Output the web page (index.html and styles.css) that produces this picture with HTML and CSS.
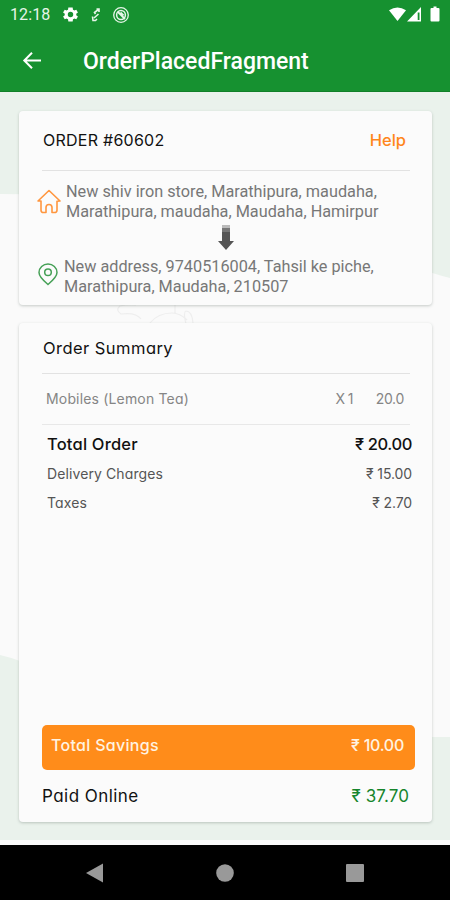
FILE: index.html
```html
<!DOCTYPE html>
<html lang="en">
<head>
<meta charset="utf-8">
<title>OrderPlacedFragment</title>
<link rel="stylesheet" href="styles.css">
</head>
<body>
<header class="top">
  <div class="status">
    <span class="time">12:18</span>
    <svg class="gear" width="17" height="17" viewBox="1 1 22 22"><path fill="#fff" fill-rule="evenodd" d="M19.4 13a7.500 7.500 0 0 0 0-2l2.200-1.700-2.100-3.600-2.600 1a7.500 7.500 0 0 0-1.700-1L14.800 3H9.200l-.4 2.700a7.500 7.500 0 0 0-1.700 1l-2.600-1-2.100 3.600L4.600 11a7.500 7.500 0 0 0 0 2l-2.200 1.700 2.100 3.600 2.600-1a7.500 7.500 0 0 0 1.700 1l.4 2.700h5.600l.4-2.700a7.500 7.500 0 0 0 1.700-1l2.600 1 2.100-3.600zM12 15.500a3.500 3.500 0 1 1 0-7 3.500 3.500 0 0 1 0 7z"/></svg>
    <svg class="sync" width="10" height="16" viewBox="0 0 10 16"><path fill="none" stroke="#e6f5e8" stroke-width="1.600" d="M8 2 3.500 5.500l1 1.500M7.500 7l-4.500 4M1.500 9.500l.5 4h2.500L6 12M5.500 2H8v3"/></svg>
    <svg class="at" width="18" height="18" viewBox="0 0 18 18" fill="none" stroke="#e6f5e8"><circle cx="9" cy="9" r="7.300" stroke-width="1.300"/><circle cx="9" cy="9" r="4.400" stroke-width="1.500"/><path stroke-width="1.800" d="M6 6l7 7M8.500 6.500l3 3"/></svg>
    <svg class="signals" width="54" height="18" viewBox="0 0 54 18"><path fill="#fff" d="M1 4.300Q9.500-1.300 18 4.300L9.500 15z"/><path fill="#fff" fill-rule="evenodd" d="M33 1v14.500H19zM29.700 6.500v7.500h1.800V6.500z"/><path fill="#fff" d="M43.500 2h2V.5h3V2h2q1 0 1 1v11.500q0 1-1 1h-7q-1 0-1-1V3q0-1 1-1z"/></svg>
  </div>
  <div class="appbar">
    <svg width="20" height="20" viewBox="0 0 20 20"><path fill="none" stroke="#fff" stroke-width="2" d="M19 8.500H2.500M10 .8 2.300 8.500l7.700 7.700"/></svg>
    <h1 class="title">OrderPlacedFragment</h1>
  </div>
</header>
<main class="screen">
  <svg class="backdrop" width="450" height="753" viewBox="0 92 450 753"><path fill="#fafafa" d="M0 92h450v753H0z"/><path fill="#eaf2ec" d="M0 92h450v186q-16-4-36-11L180 210Q90 194 0 194zM0 655q9 2 20 6l160 76h270v103H0z"/><g fill="none" stroke="#eeeeee" stroke-width="1.200"><path d="M141 319q-5-7-20-5-6-4-1-8 9-2 16-1M150 323q8-10 22-10 8 0 15 7M175 305v8M186 324q-3-12 0-13 6 0 7 12"/></g></svg>
  <section class="card order">
    <div class="order-head"><h2 class="geo order-no">ORDER #60602</h2><a class="geo help">Help</a></div>
    <div class="address from">
      <svg width="24" height="25" viewBox="0 0 24 25"><path fill="none" stroke="#ff963f" stroke-width="1.600" stroke-linejoin="round" stroke-linecap="round" d="M4 12 1 12 12 1.500 23 12l-3 .2v9q0 2.300-2.500 2.300H15v-5q0-3-3-3t-3 3v5H6.500Q4 23.500 4 21.200z"/></svg>
      <p>New shiv iron store, Marathipura, maudaha,<br>Marathipura, maudaha, Maudaha, Hamirpur</p>
    </div>
    <svg class="down" width="18" height="25" viewBox="0 0 18 25"><path fill="#bbb" d="M5 0h8v3H5z"/><path fill="#777" d="M5 3h8v4H5z"/><path fill="#555" d="M5 7h8v9h4l-8 9-8-9h4z"/></svg>
    <div class="address to">
      <svg width="20" height="23" viewBox="0 0 20 23"><g fill="none" stroke="#45a056" stroke-width="1.500"><path d="M10 21.500Q1 14 1 9.500a9 8.500 0 0 1 18 0Q19 14 10 21.500z"/><circle cx="10" cy="9.300" r="3.300"/></g></svg>
      <p>New address, 9740516004, Tahsil ke piche,<br>Marathipura, Maudaha, 210507</p>
    </div>
  </section>
  <section class="card summary">
    <h2 class="geo sum-title">Order Summary</h2>
    <div class="geo item"><span class="item-name">Mobiles (Lemon Tea)</span><span class="qty">X 1</span><span class="price">20.0</span></div>
    <div class="geo row total"><span class="l">Total Order</span><span class="r">₹ 20.00</span></div>
    <div class="geo row delivery"><span class="l">Delivery Charges</span><span class="r">₹ 15.00</span></div>
    <div class="geo row taxes"><span class="l">Taxes</span><span class="r">₹ 2.70</span></div>
    <div class="geo savings"><span class="l">Total Savings</span><span class="r">₹ 10.00</span></div>
    <div class="geo paid"><span class="l">Paid Online</span><span class="r">₹ 37.70</span></div>
  </section>
</main>
<nav class="nav">
  <svg width="18" height="20" viewBox="0 0 18 20"><path fill="#999" d="M0 10 17 .5v19z"/></svg>
  <svg width="18" height="20" viewBox="0 0 18 20"><circle cx="9" cy="10" r="8.800" fill="#999"/></svg>
  <svg width="18" height="20" viewBox="0 0 18 20"><rect y="1" width="18" height="18" rx="1" fill="#999"/></svg>
</nav>
</body>
</html>
```
FILE: styles.css
```css
* { box-sizing: border-box; }
body { margin: 0; width: 450px; height: 900px; overflow: hidden; font-family: Roboto, sans-serif; display: flex; flex-direction: column; background: #fafafa; }
h1, h2, p { margin: 0; font-weight: 400; }
svg { display: block; flex: none; }
.top { height: 92px; background: #169130; color: #fff; border-bottom: 1px solid #118028; }
.status { height: 29px; display: flex; align-items: center; padding-left: 10px; }
.time { font-size: 16px; width: 52px; letter-spacing: 0.1px; color: #e6f5e8; }
.sync { margin-left: 12px; }
.at { margin-left: 11px; }
.signals { margin-left: auto; margin-right: 8px; }
.appbar { height: 63px; display: flex; align-items: center; padding: 2px 0 0 22px; }
.title { margin-left: 41px; font-size: 23px; font-weight: 500; }
.screen { height: 753px; padding: 19px 18px 0 19px; position: relative; }
.backdrop { position: absolute; left: 0; top: 0; z-index: -1; }
.card { background: #fbfbfb; border-radius: 4px; box-shadow: 0 1px 3px rgba(60, 80, 70, 0.28); }
.geo { font-family: Inter, sans-serif; font-feature-settings: "cv11"; color: #111; }
.order { height: 194px; }
.order-head { height: 60px; margin: 0 22px 0 23px; padding: 0 4px 1px 1px; display: flex; justify-content: space-between; align-items: center; border-bottom: 1px solid #e2e2e2; }
.order-no { font-size: 16px; letter-spacing: 0.25px; }
.help { font-size: 16.500px; font-weight: 500; color: #ff861a; }
.address { display: flex; align-items: flex-start; font-size: 16.250px; line-height: 19.500px; color: #777; white-space: nowrap; }
.from { padding: 11px 0 0 18px; }
.from svg { margin-top: 7px; }
.from p { margin-left: 5px; }
.down { margin: 4px 0 7px 198px; }
.to { padding-left: 19px; }
.to svg { margin-top: 6px; }
.to p { margin-left: 6px; }
.summary { margin-top: 18px; height: 499px; display: flex; flex-direction: column; }
.sum-title { height: 51px; line-height: 51px; margin: 0 22px 0 23px; padding-left: 1px; font-size: 16.500px; letter-spacing: 0.450px; border-bottom: 1px solid #e2e2e2; }
.item { height: 51px; margin: 0 22px 0 23px; padding: 0 6px 2px 4px; display: flex; align-items: center; border-bottom: 1px solid #e8e8e8; font-size: 14px; color: #858585; }
.item-name { letter-spacing: 0.17px; }
.qty { margin-left: auto; margin-right: 23px; letter-spacing: -0.7px; }
.price { letter-spacing: -0.3px; }
.row { display: flex; justify-content: space-between; align-items: center; padding: 0 20px 0 28px; height: 29px; font-size: 14px; color: #555; }
.row .l { letter-spacing: 0.1px; }
.row .r { letter-spacing: -0.1px; }
.total { height: 31px; margin-top: 3px; font-size: 16.500px; font-weight: 500; color: #111; }
.total .l { letter-spacing: 0.2px; }
.total .r { letter-spacing: -0.4px; }
.savings { margin: auto 17px 0 23px; height: 45px; border-radius: 5px; background: #ff8c1a; color: #fff3e2; font-size: 16px; font-weight: 500; display: flex; justify-content: space-between; padding: 0 11px 0 9px; line-height: 41px; }
.savings .l { letter-spacing: 0.3px; }
.savings .r { letter-spacing: -0.25px; }
.paid { height: 52px; margin: 0 23px; display: flex; justify-content: space-between; align-items: center; font-size: 17px; }
.paid .l { letter-spacing: 0.450px; }
.paid .r { color: #16852c; letter-spacing: 0.1px; }
.nav { height: 55px; background: #000; display: flex; align-items: center; justify-content: space-between; padding: 0 86px; }
```
